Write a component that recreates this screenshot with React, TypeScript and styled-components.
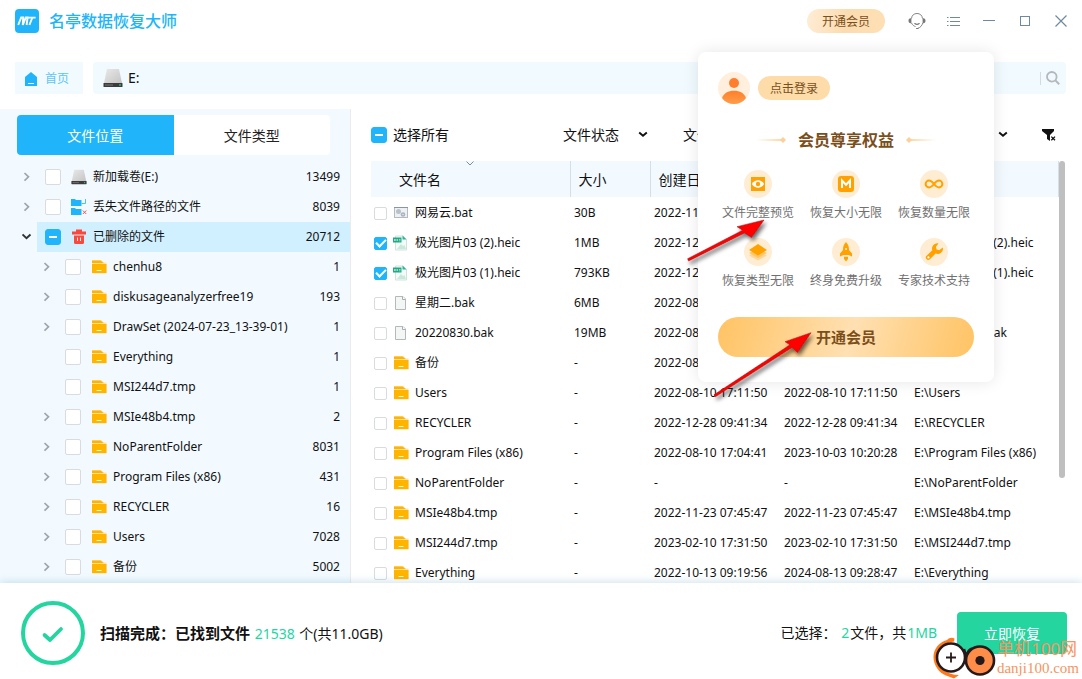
import React from "react";
import styled, { createGlobalStyle } from "styled-components";

const GlobalStyle = createGlobalStyle`
  * { box-sizing: border-box; }
  body {
    margin: 0;
    background: #fff;
    color: #111;
    font-family: "Noto Sans", "Noto Sans CJK SC", sans-serif;
    font-size: 12px;
    line-height: 18px;
  }
  button, input, select { font: inherit; color: inherit; }
  button { border: 0; padding: 0; background: none; cursor: pointer; }
  ul { list-style: none; margin: 0; padding: 0; }
  svg { display: block; flex: none; }
`;

/* ---------- window ---------- */

const Window = styled.div`
  position: relative;
  display: flex;
  flex-direction: column;
  height: 100vh;
  overflow: hidden;
`;

const TitleBar = styled.header`
  display: flex;
  align-items: center;
  height: 42px;
  padding: 0 3px 0 15px;
`;

const AppName = styled.h1`
  flex: 1;
  margin: 0 0 0 10px;
  font-size: 16px;
  line-height: 24px;
  font-weight: 500;
  color: #20b5fb;
`;

const MemberButton = styled.button`
  width: 78px;
  height: 24px;
  margin-right: 14px;
  padding-top: 2px;
  border-radius: 12px;
  background: linear-gradient(100deg, #ffedd6, #fbdcb0 50%, #ffdfb4);
  color: #7a4f1c;
`;

const WindowButton = styled.button`
  display: flex;
  align-items: center;
  justify-content: center;
  width: 36px;
  height: 36px;
`;

/* ---------- path bar ---------- */

const PathRow = styled.nav`
  display: flex;
  gap: 10px;
  padding: 20px 16px 15px 15px;
`;

const HomeLink = styled.a`
  display: flex;
  align-items: center;
  gap: 8px;
  width: 68px;
  height: 32px;
  padding: 2px 0 0 10px;
  background: #f1faff;
  color: #5cc6f8;
  text-decoration: none;
`;

const PathBox = styled.div`
  flex: 1;
  display: flex;
  align-items: center;
  height: 32px;
  padding: 0 6px 0 10px;
  border-radius: 4px;
  background: #f1faff;
  font-size: 14px;
`;

const PathText = styled.span`
  flex: 1;
  margin-left: 5px;
`;

const SearchInput = styled.input`
  width: 140px;
  height: 24px;
  border: 0;
  background: transparent;
  outline: 0;
`;

const SearchButton = styled.button`
  display: flex;
  align-items: center;
  height: 13px;
  padding-left: 5px;
  border-left: 1px solid #d5dade;
`;

/* ---------- body ---------- */

const Body = styled.main`
  flex: 1;
  display: flex;
  min-height: 0;
`;

const Sidebar = styled.aside`
  flex: none;
  width: 351px;
  overflow: hidden;
  border-right: 1px solid #ebebeb;
  background: #f2faff;
`;

const Tabs = styled.div`
  display: flex;
  margin: 6px 20px 7px 17px;
  border-radius: 4px;
  overflow: hidden;
`;

const Tab = styled.button<{ $active?: boolean }>`
  flex: 1;
  height: 40px;
  padding-top: 2px;
  font-size: 14px;
  background: ${(p) => (p.$active ? "#20b5fb" : "#fff")};
  color: ${(p) => (p.$active ? "#fff" : "#222")};
`;

const TreeItem = styled.li<{ $level: number }>`
  display: flex;
  height: 30px;
  padding-left: ${(p) => (p.$level ? 37 : 17)}px;
`;

const Expander = styled.button`
  display: flex;
  align-items: center;
  justify-content: center;
  width: 20px;
`;

const TreeLabel = styled.label<{ $selected?: boolean; $indent?: boolean }>`
  flex: 1;
  display: flex;
  align-items: center;
  padding: 0 10px 0 8px;
  margin-left: ${(p) => (p.$indent ? 20 : 0)}px;
  background: ${(p) => (p.$selected ? "#d0f0ff" : "transparent")};

  input { margin-right: 10px; }
`;

const TreeName = styled.span`
  flex: 1;
  margin-left: 6px;
  white-space: nowrap;
`;

const boxSize = { small: 13, normal: 16 };

const Box = styled.input<{ $size: "small" | "normal" }>`
  appearance: none;
  flex: none;
  display: flex;
  align-items: center;
  justify-content: center;
  width: ${(p) => boxSize[p.$size]}px;
  height: ${(p) => boxSize[p.$size]}px;
  margin: 0;
  border: 1px solid #d8dcdf;
  border-radius: 2px;
  background: #fff;

  &:checked,
  &:indeterminate {
    border-color: #20b5fb;
    background: #20b5fb;
  }
  &:indeterminate { border-radius: 3px; }
  &:indeterminate::before {
    content: "";
    width: 8px;
    height: 2px;
    background: #fff;
  }
  &:checked::before {
    content: "";
    width: 8px;
    height: 4px;
    margin-bottom: 3px;
    border: solid #fff;
    border-width: 0 0 2px 2px;
    transform: rotate(-45deg);
  }
`;

/* ---------- file list ---------- */

const Content = styled.section`
  flex: 1;
  display: flex;
  flex-direction: column;
  min-width: 0;
  padding: 0 16px 0 20px;
`;

const Toolbar = styled.div`
  display: flex;
  align-items: center;
  height: 52px;
  padding-right: 10px;
  font-size: 14px;
`;

const SelectAll = styled.label`
  display: flex;
  align-items: center;
  gap: 6px;
  width: 192px;
`;

const Filters = styled.div`
  flex: 1;
  display: flex;
  gap: 35px;
`;

const FilterField = styled.span`
  display: flex;
  align-items: center;
  width: 85px;
`;

const FilterSelect = styled.select`
  appearance: none;
  flex: 1;
  min-width: 0;
  height: 24px;
  padding: 0;
  border: 0;
  background: transparent;
`;

const ListArea = styled.div`
  flex: 1;
  display: flex;
  align-items: flex-start;
  min-height: 0;
  overflow: hidden;
`;

const FileTable = styled.table`
  flex: 1;
  width: 100%;
  table-layout: fixed;
  border-collapse: collapse;

  th {
    height: 36px;
    padding: 2px 8px 0;
    background: #f2faff;
    border-right: 1px solid #d5dfe6;
    font-size: 14px;
    font-weight: 400;
    text-align: left;
    white-space: nowrap;
  }
  th:first-child { padding-left: 28px; }
  td {
    height: 30px;
    padding: 2px 0 0 4px;
    white-space: nowrap;
  }
  td:first-child { padding-left: 3px; }
`;

const SortMark = styled.span`
  position: absolute;
  top: 0;
  left: 50%;
  transform: translateX(-50%);
`;

const HeadCell = styled.th`
  position: relative;
`;

const FileLabel = styled.label`
  display: flex;
  align-items: center;
  height: 28px;

  svg { margin: 0 6px; }
`;

const ScrollTrack = styled.div`
  flex: none;
  align-self: stretch;
  width: 7px;
`;

const ScrollThumb = styled.div`
  width: 6px;
  height: 75%;
  border-radius: 3px;
  background: #bfbfbf;
`;

/* ---------- footer ---------- */

const Footer = styled.footer`
  position: relative;
  display: flex;
  align-items: center;
  height: 96px;
  padding: 4px 15px 0 21px;
  background: #fff;
  box-shadow: 0 -1px 8px rgba(60, 140, 180, 0.25);
  font-size: 14px;
`;

const ScanResult = styled.p`
  flex: 1;
  margin: 0 0 0 15px;
`;

const ScanStatus = styled.strong`
  font-size: 15px;
`;

const Accent = styled.span`
  margin: 0 1px;
  color: #24d5a2;
`;

const Picked = styled.p`
  margin: 0 19px 0 0;
`;

const RecoverButton = styled.button`
  width: 110px;
  height: 42px;
  padding-top: 2px;
  border-radius: 4px;
  background: #24d5a0;
  color: #fff;
`;

/* ---------- membership popover ---------- */

const Popover = styled.section`
  position: absolute;
  top: 52px;
  right: 88px;
  width: 296px;
  padding: 20px;
  padding-bottom: 25px;
  border-radius: 8px;
  background: #fff;
  box-shadow: 0 0 16px rgba(0, 0, 0, 0.1);
`;

const Account = styled.div`
  display: flex;
  align-items: center;
  gap: 8px;
`;

const LoginButton = styled.button`
  width: 72px;
  height: 24px;
  padding-top: 2px;
  border-radius: 12px;
  background: #fddcaa;
  color: #7a4f1c;
`;

const PerksTitle = styled.h2`
  display: flex;
  align-items: center;
  justify-content: center;
  gap: 12px;
  margin: 24px 0 18px;
  font-size: 16px;
  line-height: 24px;
  color: #7a4f1c;
`;

const Perks = styled.ul`
  display: grid;
  grid-template-columns: repeat(3, 1fr);
  row-gap: 16px;
  margin: 0 -4px;
`;

const Perk = styled.li`
  display: flex;
  flex-direction: column;
  align-items: center;
  gap: 6px;
  color: #707070;
`;

const JoinButton = styled.button`
  width: 100%;
  height: 40px;
  margin-top: 27px;
  border-radius: 20px;
  background: linear-gradient(105deg, #ffc363, #ffe0b2 52%, #ffc363);
  color: #7a4f1c;
  font-size: 15px;
  font-weight: 700;
`;

const Arrows = styled.svg`
  position: absolute;
  left: -20px;
  top: 160px;
  pointer-events: none;
`;

/* ---------- site mark ---------- */

const SiteMark = styled.div`
  position: absolute;
  right: 3px;
  bottom: 0;
  display: flex;
  align-items: center;
  gap: 1px;
  pointer-events: none;
`;

const SiteName = styled.div`
  color: #f79460;
  font-size: 17px;
  line-height: 20px;
  white-space: nowrap;
`;

const SiteUrl = styled.div`
  font-family: "Liberation Serif", serif;
  font-size: 15px;
  line-height: 18px;
`;

/* ---------- icons ---------- */

const Logo = () => (
  <svg width="24" height="24" viewBox="0 0 24 24">
    <rect width="24" height="24" rx="4" fill="#20b5fb" />
    <path d="M3.2 16 6.2 8.5 8.2 8.5 7.8 16 10.8 8.5 12.6 8.5 11.6 16M13.4 8.6H20.6M17.2 9 14.4 16" fill="none" stroke="#fff" strokeWidth="1.9" />
  </svg>
);

const HomeIcon = () => (
  <svg width="12" height="14" viewBox="0 0 12 14">
    <path d="M6 0 12 5V14H0V5Z" fill="#20b5fb" />
    <path d="M3 11.5H9" stroke="#fff" />
  </svg>
);

const DriveIcon = ({ size = 16 }: { size?: number }) => (
  <svg width={size} height={size} viewBox="0 0 20 20">
    <defs>
      <linearGradient id="drive" x1="0" y1="0" x2="1" y2="1">
        <stop offset="0" stopColor="#e9e9e9" />
        <stop offset="1" stopColor="#c4c4c4" />
      </linearGradient>
    </defs>
    <path d="M4 1H16L19 15H1Z" fill="url(#drive)" />
    <rect x="0.5" y="15" width="19" height="4" rx="0.6" fill="#3c3c3c" />
    <path d="M2 17H10" stroke="#777" />
    <circle cx="17" cy="17" r="0.9" fill="#32c46c" />
  </svg>
);

const FolderIcon = () => (
  <svg width="16" height="14" viewBox="0 0 16 14">
    <path d="M1 0H10L13 2.4H15.5V13.5H1Z" fill="#ffe3a0" />
    <path d="M1 0.5H9.6L12.6 3H1Z" fill="#ffb400" />
    <path d="M1 4H15.5V13H1Z" fill="#ffb400" />
    <path d="M5.5 10.5H10.5" stroke="#fff3d2" />
  </svg>
);

const LostIcon = () => (
  <svg width="16" height="16" viewBox="0 0 16 16">
    <path d="M0 0H4L5 1H10.500V7H0ZM0 9H4L5 10H10.500V16H0Z" fill="#20b5fb" />
    <path d="M10.500 4.500H14.500V0" fill="none" stroke="#4cc3f7" />
    <path d="M11.800 11.500 15.300 15M15.300 11.500 11.800 15" stroke="#f0564c" />
  </svg>
);

const TrashIcon = () => (
  <svg width="16" height="16" viewBox="0 0 16 16">
    <path d="M5 2.500H11" stroke="#f8493c" strokeWidth="2" />
    <path d="M5 0.500H11V2.500H15V5.500H1V2.500H5Z" fill="#f8493c" />
    <path d="M3 6.500H13V13.500Q13 15 11.500 15H4.500Q3 15 3 13.500Z" fill="#f8493c" />
    <path d="M6.500 8.500V12M9.500 8.500V12" stroke="#fff" strokeWidth="0.900" />
  </svg>
);

const BatIcon = () => (
  <svg width="16" height="14" viewBox="0 0 16 14">
    <rect x="1.5" y="1.5" width="13" height="10" fill="#eef1f3" stroke="#b4bbc0" />
    <path d="M1 1.500H15" stroke="#8c959b" />
    <circle cx="5.500" cy="5.500" r="2.5" fill="#b8c1c9" />
    <circle cx="10" cy="8.500" r="2.300" fill="#a9b4be" />
    <circle cx="10" cy="8.500" r="0.700" fill="#eef1f3" />
  </svg>
);

const HeicIcon = () => (
  <svg width="16" height="16" viewBox="0 0 16 16">
    <path d="M2.5 1H10L13.5 4.5V15H2.5Z" fill="#f3fbf8" stroke="#cfe3dc" />
    <path d="M9.5 0.5 13.5 4.5H9.5Z" fill="#2fb592" />
    <path d="M4 14 8 9 10 11 11.5 10 13 14Z" fill="#c9e9df" />
    <rect x="0" y="2.5" width="8.5" height="5" fill="#23a884" />
    <path d="M1.5 4V6M3 4V6M1.5 5H3M4.5 4V6M6 4.5H7.5M6 5.8H7.5" stroke="#c7efe3" strokeWidth="0.7" />
  </svg>
);

const FileIcon = () => (
  <svg width="16" height="16" viewBox="0 0 16 16">
    <path d="M2.500 1.500H10L12.500 4V14.500H2.500Z" fill="#f4f6f6" stroke="#b3b8ba" />
    <path d="M9.500 1.500V4.500H12.500" fill="#fff" stroke="#a8adaf" />
  </svg>
);

const Chevron = ({ down }: { down?: boolean }) =>
  down ? (
    <svg width="10" height="10" viewBox="0 0 10 10">
      <path d="M0.500 2.500 4.500 6.200 8.500 2.500" fill="none" stroke="#333" strokeWidth="1.900" />
    </svg>
  ) : (
    <svg width="10" height="10" viewBox="0 0 10 10">
      <path d="M2.500 1 6.500 4.800 2.500 8.600" fill="none" stroke="#a0a5a8" strokeWidth="1.700" />
    </svg>
  );

const Caret = () => (
  <svg width="10" height="8" viewBox="0 0 10 8">
    <path d="M1.2 1.5 5 4.8 8.8 1.5" fill="none" stroke="#111" strokeWidth="1.9" />
  </svg>
);

const ClearFilterIcon = () => (
  <svg width="14" height="14" viewBox="0 0 14 14">
    <path d="M0 1H12V3L8 7V13L5 11V7L0 3Z" fill="#111" />
    <path d="M9.300 8.600 13 12.300M13 8.600 9.300 12.300" stroke="#111" strokeWidth="1.300" />
  </svg>
);

const SearchIcon = () => (
  <svg width="14" height="14" viewBox="0 0 14 14">
    <circle cx="5.800" cy="5.800" r="4.800" fill="none" stroke="#b3b8bb" strokeWidth="1.800" />
    <path d="M9.400 9.400 13.200 13.200" stroke="#b3b8bb" strokeWidth="2" />
  </svg>
);

const HeadsetIcon = () => (
  <svg width="18" height="18" viewBox="0 0 18 18">
    <path d="M3.500 6.500C3.800 3.200 6 1.500 9 1.500S14.200 3.200 14.500 6.500M3.500 11C4.500 13 5.800 14.200 7.500 14.500M14.800 11C14 13.500 12.500 15.500 10 16.200" fill="none" stroke="#868686" />
    <path d="M3.400 6.200V11.200H2.600C1.200 11.200 0.500 10.200 0.500 8.800S1.200 6.200 2.600 6.200ZM14.600 6.200V11.200H15.400C16.800 11.200 17.500 10.200 17.500 8.800S16.800 6.200 15.400 6.200Z" fill="#777" />
    <path d="M6.800 11.600C8.200 12.600 9.800 12.600 11.200 11.600M8.500 16.500H10" fill="none" stroke="#777" strokeWidth="1.200" strokeLinecap="round" />
  </svg>
);

const DoneIcon = () => (
  <svg width="64" height="64" viewBox="0 0 64 64">
    <circle cx="32" cy="32" r="30" fill="none" stroke="#24d5a0" strokeWidth="4" />
    <path d="M23.5 34 29 39 40 28" fill="none" stroke="#24d5a0" strokeWidth="3.8" strokeLinecap="round" strokeLinejoin="round" />
  </svg>
);

const Avatar = () => (
  <svg width="32" height="32" viewBox="0 0 32 32">
    <defs>
      <linearGradient id="person" x1="0" y1="0" x2="0" y2="1">
        <stop offset="0" stopColor="#ff7f2a" />
        <stop offset="1" stopColor="#ff9d4a" />
      </linearGradient>
    </defs>
    <circle cx="16" cy="16" r="16" fill="#ffefdc" />
    <circle cx="16" cy="11" r="5" fill="#ff7f2f" />
    <path d="M4 26C6 21 10 18.8 16 18.8S26 21 28 26C25 30 21 32 16 32S7 30 4 26Z" fill="url(#person)" />
  </svg>
);

const TitleRule = ({ flip }: { flip?: boolean }) => (
  <svg width="30" height="8" viewBox="0 0 30 8">
    <defs>
      <linearGradient id={flip ? "ruleRight" : "ruleLeft"} x1={flip ? "1" : "0"} x2={flip ? "0" : "1"} y1="0" y2="0">
        <stop offset="0" stopColor="#fcd6a0" stopOpacity="0" />
        <stop offset="1" stopColor="#fcd6a0" />
      </linearGradient>
    </defs>
    <rect x={flip ? 3 : 0} y="3" width="27" height="2" fill={`url(#${flip ? "ruleRight" : "ruleLeft"})`} />
    <path d={flip ? "M3 1 6 4 3 7 0 4Z" : "M27 1 30 4 27 7 24 4Z"} fill="#fcd09a" />
  </svg>
);

const perkDrawings: Record<string, React.ReactNode> = {
  preview: (
    <>
      <rect x="7" y="7" width="14" height="14" fill="#ffa200" />
      <path d="M8 14C10.5 9 17.5 9 20 14 17.5 19 10.5 19 8 14Z" fill="#fff" />
      <circle cx="14" cy="14" r="2.2" fill="#ffa200" />
    </>
  ),
  size: (
    <>
      <rect x="6" y="6" width="16" height="16" rx="3" fill="#ffa200" />
      <path d="M10 18V10.5L14 14.8 18 10.5V18" fill="none" stroke="#fff" strokeWidth="2" />
    </>
  ),
  count: (
    <path d="M14 14C12.3 11.8 11 10.6 9 10.6A3.4 3.4 0 0 0 9 17.4C11 17.4 12.3 16.2 14 14S17 10.6 19 10.6A3.4 3.4 0 0 1 19 17.4C17 17.4 15.7 16.2 14 14Z" fill="none" stroke="#ffa200" strokeWidth="2" />
  ),
  types: (
    <>
      <path d="M5 17.5 14 13 23 17.5 14 22.5Z" fill="#ffd699" />
      <path d="M5 15 14 10.5 23 15 14 20Z" fill="#ffc566" />
      <path d="M5 12 14 6 23 12 14 17.5Z" fill="#ffa200" />
    </>
  ),
  upgrade: (
    <>
      <path d="M14 4C16.5 6.5 17 9 17 12L20 15.5V18.5L16.5 17H11.5L8 18.5V15.5L11 12C11 9 11.5 6.5 14 4Z" fill="#ffa200" />
      <path d="M12 18.8H16V21L14 23.5 12 21Z" fill="#ffa200" />
      <circle cx="14" cy="11" r="1" fill="#ffedd3" />
    </>
  ),
  support: (
    <>
      <path d="M18.5 5.3A5.3 5.3 0 0 0 12.3 12.2L6.6 17.7A2.3 2.3 0 0 0 9.9 21.2L15.6 15.6A5.3 5.3 0 0 0 22.8 9.5L19.2 12.3 16.6 11.6 15.9 9Z" fill="#ffa200" />
      <circle cx="8.4" cy="19.4" r="1.1" fill="#fff" />
    </>
  ),
};

const PerkIcon = ({ kind }: { kind: string }) => (
  <svg width="28" height="28" viewBox="0 0 28 28">
    <circle cx="14" cy="14" r="14" fill="#ffedd3" />
    {perkDrawings[kind]}
  </svg>
);

const SiteLogo = () => (
  <svg width="64" height="42" viewBox="0 0 64 42">
    <path d="M15 3C7 5 1.500 12 1.500 20S7 36 14 38.500L22 41.500 27 38C14 38 5.500 30 5.500 20.500 5.500 12 9 7 22 4.500L22.500 1.500C20 0 17 1 15 3Z" fill="#ff7a1a" />
    <circle cx="19" cy="20.500" r="14" fill="#fff" stroke="#26191a" strokeWidth="2.600" />
    <path d="M19 15.500V25.500M14 20.500H24" stroke="#26191a" strokeWidth="1.800" />
    <path d="M32 12C33 17 35 21 37 25M35 17C37 12.500 38.500 11.500 41 12" fill="none" stroke="#26191a" strokeWidth="2.600" />
    <circle cx="48" cy="23.500" r="14" fill="#ff8d4a" stroke="#26191a" strokeWidth="2.600" />
    <circle cx="48" cy="23.500" r="4.600" fill="#26191a" />
  </svg>
);

/* ---------- data ---------- */

const icons: Record<string, React.ReactNode> = {
  drive: <DriveIcon />,
  lost: <LostIcon />,
  trash: <TrashIcon />,
  folder: <FolderIcon />,
  bat: <BatIcon />,
  heic: <HeicIcon />,
  file: <FileIcon />,
};

type Node = { name: string; count: number; icon: string; level: number; state: "open" | "closed" | "leaf" };

const tree: Node[] = [
  { name: "新加载卷(E:)", count: 13499, icon: "drive", level: 0, state: "closed" },
  { name: "丢失文件路径的文件", count: 8039, icon: "lost", level: 0, state: "closed" },
  { name: "已删除的文件", count: 20712, icon: "trash", level: 0, state: "open" },
  { name: "chenhu8", count: 1, icon: "folder", level: 1, state: "closed" },
  { name: "diskusageanalyzerfree19", count: 193, icon: "folder", level: 1, state: "closed" },
  { name: "DrawSet (2024-07-23_13-39-01)", count: 1, icon: "folder", level: 1, state: "closed" },
  { name: "Everything", count: 1, icon: "folder", level: 1, state: "leaf" },
  { name: "MSI244d7.tmp", count: 1, icon: "folder", level: 1, state: "leaf" },
  { name: "MSIe48b4.tmp", count: 2, icon: "folder", level: 1, state: "closed" },
  { name: "NoParentFolder", count: 8031, icon: "folder", level: 1, state: "closed" },
  { name: "Program Files (x86)", count: 431, icon: "folder", level: 1, state: "closed" },
  { name: "RECYCLER", count: 16, icon: "folder", level: 1, state: "closed" },
  { name: "Users", count: 7028, icon: "folder", level: 1, state: "closed" },
  { name: "备份", count: 5002, icon: "folder", level: 1, state: "closed" },
];

type FileRow = [name: string, icon: string, size: string, created: string, modified: string, checked?: boolean];

const files: FileRow[] = [
  ["网易云.bat", "bat", "30B", "2022-11-23 07:45:47", "2022-11-23 07:45:47"],
  ["极光图片03 (2).heic", "heic", "1MB", "2022-12-28 09:41:34", "2022-12-28 09:41:34", true],
  ["极光图片03 (1).heic", "heic", "793KB", "2022-12-28 09:41:34", "2022-12-28 09:41:34", true],
  ["星期二.bak", "file", "6MB", "2022-08-30 10:12:20", "2022-08-30 10:12:20"],
  ["20220830.bak", "file", "19MB", "2022-08-30 10:12:20", "2022-08-30 10:12:20"],
  ["备份", "folder", "-", "2022-08-10 17:11:50", "2022-08-10 17:11:50"],
  ["Users", "folder", "-", "2022-08-10 17:11:50", "2022-08-10 17:11:50"],
  ["RECYCLER", "folder", "-", "2022-12-28 09:41:34", "2022-12-28 09:41:34"],
  ["Program Files (x86)", "folder", "-", "2022-08-10 17:04:41", "2023-10-03 10:20:28"],
  ["NoParentFolder", "folder", "-", "-", "-"],
  ["MSIe48b4.tmp", "folder", "-", "2022-11-23 07:45:47", "2022-11-23 07:45:47"],
  ["MSI244d7.tmp", "folder", "-", "2023-02-10 17:31:50", "2023-02-10 17:31:50"],
  ["Everything", "folder", "-", "2022-10-13 09:19:56", "2024-08-13 09:28:47"],
];

const filters = ["文件状态", "文件类型", "文件大小", "修改日期"];

const perks = [
  ["preview", "文件完整预览"],
  ["size", "恢复大小无限"],
  ["count", "恢复数量无限"],
  ["types", "恢复类型无限"],
  ["upgrade", "终身免费升级"],
  ["support", "专家技术支持"],
];

/* ---------- parts ---------- */

type CheckboxProps = { size?: "small" | "normal"; checked?: boolean; partial?: boolean };

const Checkbox = ({ size = "normal", checked, partial }: CheckboxProps) => (
  <Box
    type="checkbox"
    $size={size}
    defaultChecked={checked}
    ref={(el: HTMLInputElement | null) => {
      if (el) el.indeterminate = !!partial;
    }}
  />
);

const LocationTree = () => (
  <ul>
    {tree.map((n) => (
      <TreeItem key={n.name} $level={n.level}>
        {n.state !== "leaf" && (
          <Expander aria-label={`展开 ${n.name}`}>
            <Chevron down={n.state === "open"} />
          </Expander>
        )}
        <TreeLabel $selected={n.state === "open"} $indent={n.state === "leaf"}>
          <Checkbox partial={n.state === "open"} />
          {icons[n.icon]}
          <TreeName>{n.name}</TreeName>
          <span>{n.count}</span>
        </TreeLabel>
      </TreeItem>
    ))}
  </ul>
);

const FileList = () => (
  <ListArea>
    <FileTable>
      <colgroup>
        <col width="199" />
        <col width="80" />
        <col width="130" />
        <col width="130" />
        <col />
      </colgroup>
      <thead>
        <tr>
          <HeadCell>
            文件名
            <SortMark>
              <svg width="8" height="5" viewBox="0 0 8 5">
                <path d="M0.5 0.5 4 4 7.5 0.5" fill="none" stroke="#7f8b93" />
              </svg>
            </SortMark>
          </HeadCell>
          <th>大小</th>
          <th>创建日期</th>
          <th>修改日期</th>
          <th>路径</th>
        </tr>
      </thead>
      <tbody>
        {files.map(([name, icon, size, created, modified, checked]) => (
          <tr key={name}>
            <td>
              <FileLabel>
                <Checkbox size="small" checked={checked} />
                {icons[icon]}
                {name}
              </FileLabel>
            </td>
            <td>{size}</td>
            <td>{created}</td>
            <td>{modified}</td>
            <td>{`E:\\${name}`}</td>
          </tr>
        ))}
      </tbody>
    </FileTable>
    <ScrollTrack>
      <ScrollThumb />
    </ScrollTrack>
  </ListArea>
);

const MemberPopover = () => (
  <Popover aria-label="会员">
    <Account>
      <Avatar />
      <LoginButton>点击登录</LoginButton>
    </Account>
    <PerksTitle>
      <TitleRule />
      会员尊享权益
      <TitleRule flip />
    </PerksTitle>
    <Perks>
      {perks.map(([kind, label]) => (
        <Perk key={kind}>
          <PerkIcon kind={kind} />
          {label}
        </Perk>
      ))}
    </Perks>
    <JoinButton>开通会员</JoinButton>
    <Arrows width="150" height="200" viewBox="0 0 150 200" aria-hidden="true">
      <defs>
        <filter id="drop" x="-20%" y="-20%" width="150%" height="150%">
          <feDropShadow dx="2" dy="3" stdDeviation="2" floodOpacity="0.6" />
        </filter>
      </defs>
      <g filter="url(#drop)" fill="#ff0000" stroke="#8f1c1c" strokeWidth="0.5">
        <path d="M9.6 46.8 64.6 18.2 59 14.7 86 8 73.500 25.500 66.500 20.900 10.600 49Z" />
        <path d="M36 182.800 112 132.800 107 129.700 133 120.700 119.500 140.500 114 135.400 37.400 184.800Z" />
      </g>
    </Arrows>
  </Popover>
);

export default function App() {
  return (
    <Window>
      <GlobalStyle />
      <TitleBar>
        <Logo />
        <AppName>名亭数据恢复大师</AppName>
        <MemberButton>开通会员</MemberButton>
        <WindowButton aria-label="客服">
          <HeadsetIcon />
        </WindowButton>
        <WindowButton aria-label="菜单">
          <svg width="13" height="11" viewBox="0 0 13 11">
            <path d="M0 1.5H1.5M0 5.5H1.5M0 9.5H1.5M3 1.5H13M3 5.5H13M3 9.5H13" stroke="#6f8aa0" />
          </svg>
        </WindowButton>
        <WindowButton aria-label="最小化">
          <svg width="12" height="12" viewBox="0 0 12 12">
            <path d="M0 5.5H12" stroke="#6f8aa0" />
          </svg>
        </WindowButton>
        <WindowButton aria-label="最大化">
          <svg width="10" height="10" viewBox="0 0 10 10">
            <rect x="0.5" y="0.5" width="9" height="9" fill="none" stroke="#6f8aa0" />
          </svg>
        </WindowButton>
        <WindowButton aria-label="关闭">
          <svg width="12" height="12" viewBox="0 0 12 12">
            <path d="M0.5 0.5 11.5 11.5M11.5 0.5 0.5 11.5" stroke="#6f8aa0" strokeWidth="1.2" />
          </svg>
        </WindowButton>
      </TitleBar>

      <PathRow>
        <HomeLink href="#home">
          <HomeIcon />
          首页
        </HomeLink>
        <PathBox>
          <DriveIcon size={20} />
          <PathText>E:</PathText>
          <SearchInput type="search" aria-label="搜索" />
          <SearchButton aria-label="搜索文件">
            <SearchIcon />
          </SearchButton>
        </PathBox>
      </PathRow>

      <Body>
        <Sidebar>
          <Tabs>
            <Tab $active>文件位置</Tab>
            <Tab>文件类型</Tab>
          </Tabs>
          <LocationTree />
        </Sidebar>
        <Content>
          <Toolbar>
            <SelectAll>
              <Checkbox partial />
              选择所有
            </SelectAll>
            <Filters>
              {filters.map((f) => (
                <FilterField key={f}>
                  <FilterSelect aria-label={f}>
                    <option>{f}</option>
                  </FilterSelect>
                  <Caret />
                </FilterField>
              ))}
            </Filters>
            <button aria-label="清除筛选">
              <ClearFilterIcon />
            </button>
          </Toolbar>
          <FileList />
        </Content>
      </Body>

      <Footer>
        <DoneIcon />
        <ScanResult>
          <ScanStatus>扫描完成：已找到文件</ScanStatus> <Accent>21538</Accent> 个(共11.0GB)
        </ScanResult>
        <Picked>
          已选择： <Accent>2</Accent>文件，共<Accent>1MB</Accent>
        </Picked>
        <RecoverButton>立即恢复</RecoverButton>
      </Footer>

      <MemberPopover />

      <SiteMark>
        <SiteLogo />
        <SiteName>
          单机100网
          <SiteUrl>danji100.com</SiteUrl>
        </SiteName>
      </SiteMark>
    </Window>
  );
}
